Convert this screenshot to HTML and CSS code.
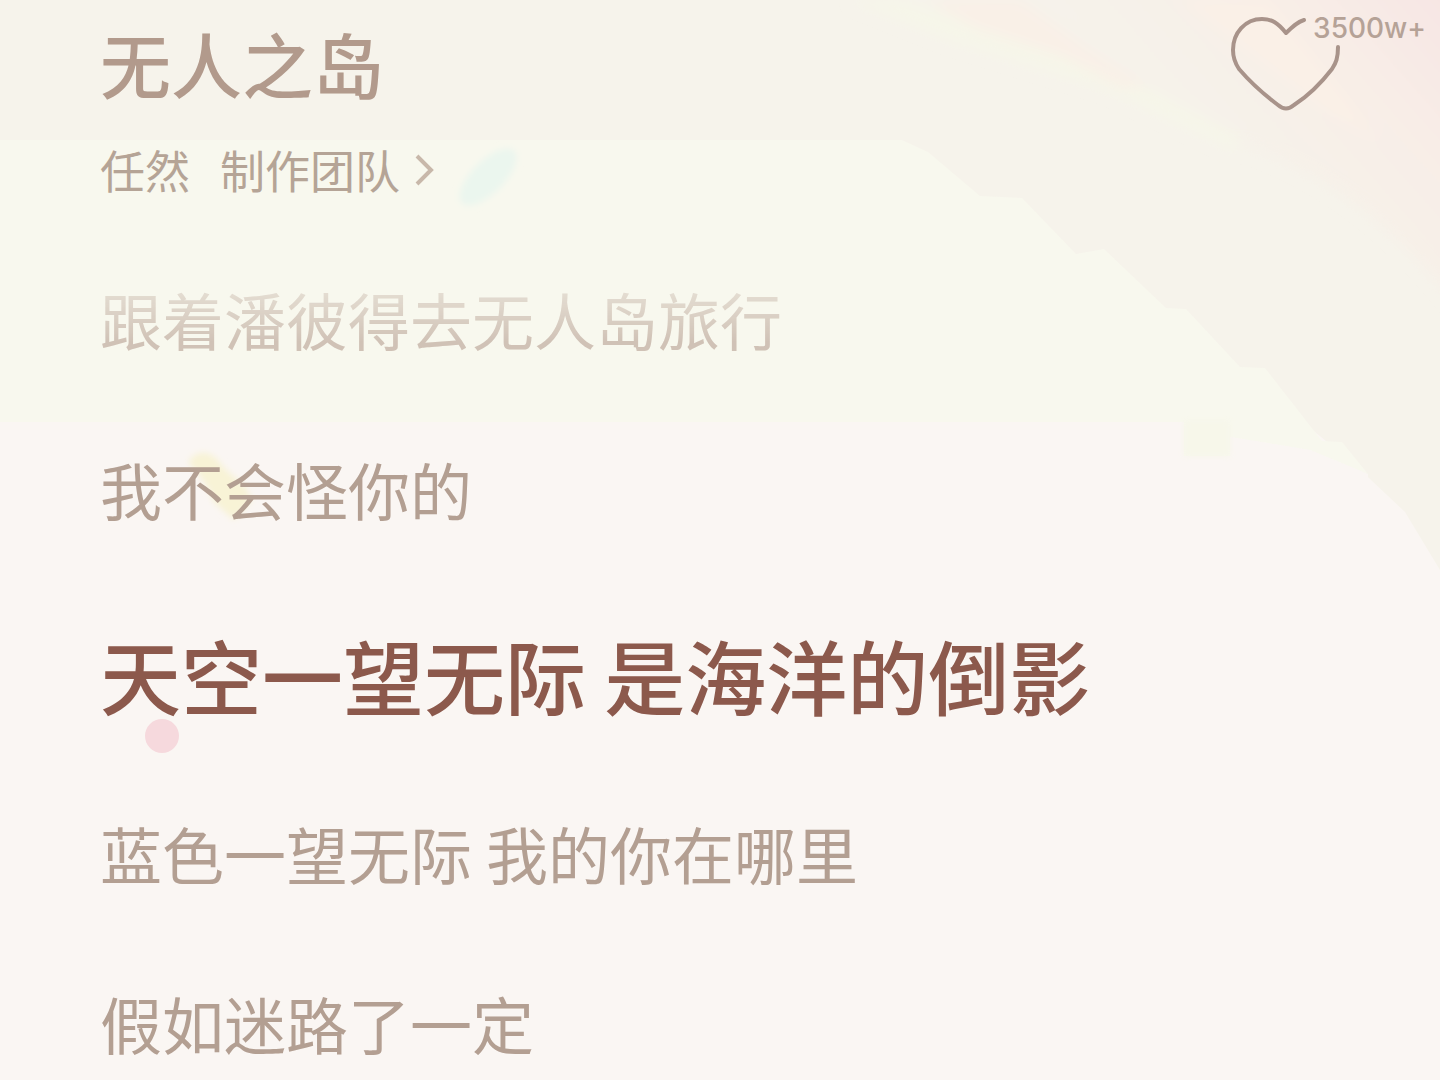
FILE: index.html
```html
<!DOCTYPE html>
<html lang="zh-CN">
<head>
  <meta charset="UTF-8" />
  <meta name="viewport" content="width=device-width, initial-scale=1" />
  <title>无人之岛 - 任然</title>
  <link rel="stylesheet" href="styles.css">
</head>
<body>
  <!-- Background: soft colour bands and confetti -->
  <svg class="backdrop" viewBox="0 0 1440 1080" preserveAspectRatio="none" aria-hidden="true">
    <defs>
      <linearGradient id="glow" gradientUnits="userSpaceOnUse" x1="1180" y1="230" x2="1440" y2="0">
        <stop offset="0" stop-color="#f6f3eb" />
        <stop offset="0.25" stop-color="#f6f2ea" />
        <stop offset="0.5" stop-color="#f7f0e8" />
        <stop offset="0.7" stop-color="#f8ede7" />
        <stop offset="1" stop-color="#f7e6e4" />
      </linearGradient>
      <filter id="soft" x="-20%" y="-20%" width="140%" height="140%">
        <feGaussianBlur stdDeviation="3" />
      </filter>
      <filter id="softer" x="-20%" y="-20%" width="140%" height="140%">
        <feGaussianBlur stdDeviation="7" />
      </filter>
    </defs>
    <rect width="1440" height="1080" fill="#faf6f3" />
    <path fill="#f6f3eb" d="M0 0H1440V570L1405 512L1352 462L1300 420H0Z" />
    <g filter="url(#softer)">
      <path fill="url(#glow)" d="M840 -20H1460V310C1390 220 1320 170 1230 142C1130 80 1020 40 840 -20Z" />
      <path fill="#f6f6e9" d="M850 0H900L1090 57L1240 138L1235 150L1110 90L950 40Z" />
      <path fill="#f9f0e7" d="M925 0H1020L1090 50L1150 88L1120 86L1060 56L975 28Z" />
      <path fill="#faf0e7" d="M1180 0H1270L1350 100L1378 140L1330 115L1240 45Z" />
    </g>
    <path fill="#f8f8ee" d="M0 140H902L928 152L980 196L1022 198L1076 254L1104 249L1166 308L1186 309L1240 367L1265 368L1322 441L1342 442L1368 474L1310 450L1230 437V456H1184V422H0Z" />
    <path fill="#faf6f3" d="M0 422H1184V456H1230V437L1310 450L1368 474V520H0Z" />
    <rect x="1184" y="420" width="46" height="36" fill="#f7f7ea" filter="url(#soft)" />
    <ellipse cx="488" cy="177" rx="16" ry="37" transform="rotate(45 488 177)" fill="#ebf6ee" filter="url(#soft)" />
    <path d="M188 462Q200 446 216 458Q228 474 244 484L252 500L234 520L214 502Q206 480 188 462Z" fill="#f8f3d6" filter="url(#soft)" />
    <circle cx="162" cy="736" r="17" fill="#f6d9dd" />
  </svg>

  <div class="player">
    <header class="song">
      <div class="song-info">
        <h1>无人之岛</h1>
        <div class="credits">
          <a href="#singer">任然</a>
          <a href="#team" class="team">制作团队
            <svg class="chevron" viewBox="0 0 20 34" aria-hidden="true">
              <path d="M3 3L17 17L3 31" />
            </svg>
          </a>
        </div>
      </div>

      <button class="like" type="button" aria-label="喜欢 3500w+">
        <svg class="heart" viewBox="0 0 112 98" aria-hidden="true">
          <path d="M74 8C67 10 62 15 56 21C48 11 42 7 32 7C15 7 3 21 3 38C3 46 5 51 9 57C21 71 36 84 48 93Q56 100 64 93C78 84 92 70 102 57C106 51 108 46 108 35" />
        </svg>
        <span class="like-count">3500w+</span>
      </button>
    </header>

    <ol class="lyrics">
      <li class="line faded">跟着潘彼得去无人岛旅行</li>
      <li class="line">我不会怪你的</li>
      <li class="line current">天空一望无际 是海洋的倒影</li>
      <li class="line">蓝色一望无际 我的你在哪里</li>
      <li class="line">假如迷路了一定</li>
    </ol>
  </div>
</body>
</html>
```
FILE: styles.css
```css
* {
  margin: 0;
  padding: 0;
  box-sizing: border-box;
}

body {
  position: relative;
  min-height: 100vh;
  overflow-x: hidden;
  background-color: #faf6f3;
  color: #b39f92;
  font-family: "Noto Sans CJK SC", sans-serif;
}

.backdrop {
  position: absolute;
  top: 0;
  left: 0;
  width: 100%;
  height: 100%;
}

.player {
  position: relative;
  padding: 12px 14px 0 100px;
}

/* Song header */
.song {
  display: flex;
  justify-content: space-between;
  align-items: flex-start;
}

h1 {
  font-size: 71px;
  font-weight: 500;
  line-height: 100px;
  color: #b29a8c;
}

.credits {
  display: flex;
  gap: 30px;
  font-size: 45px;
  line-height: 60px;
  margin-top: 28px;
}

.credits a {
  color: #b5a496;
  text-decoration: none;
}

.team {
  display: flex;
  align-items: center;
  gap: 14px;
}

.chevron {
  width: 20px;
  height: 34px;
  fill: none;
  stroke: #c8b8aa;
  stroke-width: 4;
}

/* Like button */
.like {
  position: relative;
  width: 196px;
  height: 98px;
  border: none;
  background: none;
  color: #b5a297;
  cursor: pointer;
}

.heart {
  display: block;
  width: 112px;
  height: 98px;
  overflow: visible;
  fill: none;
  stroke: #a8938a;
  stroke-width: 4;
  stroke-linecap: round;
  stroke-linejoin: round;
}

.like-count {
  position: absolute;
  top: 0;
  right: 0;
  font-family: Inter, sans-serif;
  font-size: 28px;
  font-weight: 500;
  line-height: 32px;
}

/* Lyrics */
.lyrics {
  margin-top: 74px;
  list-style: none;
}

.line {
  font-size: 62px;
  line-height: 90px;
  margin-bottom: 80px;
}

.line.current {
  font-size: 81px;
  font-weight: 500;
  line-height: 104px;
  padding: 8px 0 2px;
  color: #8c594c;
}

.line.faded {
  color: #d0c2b6;
  -webkit-mask-image: linear-gradient(rgba(0, 0, 0, 0.5) 20%, #000 75%);
  mask-image: linear-gradient(rgba(0, 0, 0, 0.5) 20%, #000 75%);
}

.line:last-child {
  margin-bottom: 0;
}
```
